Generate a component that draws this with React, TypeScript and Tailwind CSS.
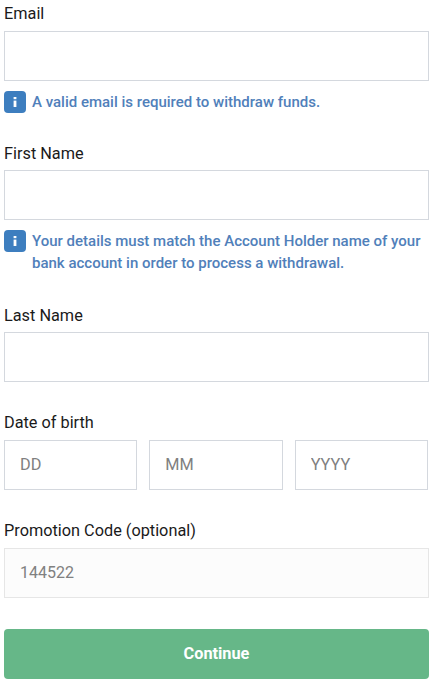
import React from 'react';

function InfoBadge() {
  return (
    <span className="flex h-[22px] w-[22px] shrink-0 items-center justify-center rounded-[4px] bg-[#3d7ebf]">
      <svg width="4" height="10" viewBox="0 0 4 10">
        <rect x="0.6" y="0" width="2.8" height="2.2" fill="#fff" />
        <rect x="0.6" y="3.6" width="2.8" height="6.4" fill="#fff" />
      </svg>
    </span>
  );
}

function Label({ children }: { children: React.ReactNode }) {
  return <label className="block text-[16.3px] leading-[20px] text-[#1a1a1a]">{children}</label>;
}

function Hint({ children }: { children: React.ReactNode }) {
  return (
    <div className="mt-[10px] flex gap-[6px]">
      <InfoBadge />
      <p className="text-[15px] font-medium leading-[22px] text-[#5080ba]">{children}</p>
    </div>
  );
}

export default function App() {
  return (
    <div className="h-[681px] w-[433px] overflow-hidden bg-white px-[4px] pt-[4px] font-['Roboto',sans-serif]">
      <div>
        <Label>Email</Label>
        <input className="mt-[7px] block h-[50px] w-full border border-[#d4d8de] bg-white" />
        <Hint>A valid email is required to withdraw funds.</Hint>
      </div>

      <div className="mt-[31px]">
        <Label>First Name</Label>
        <input className="mt-[6px] block h-[50px] w-full border border-[#d4d8de] bg-white" />
        <Hint>Your details must match the Account Holder name of your bank account in order to process a withdrawal.</Hint>
      </div>

      <div className="mt-[32px]">
        <Label>Last Name</Label>
        <input className="mt-[6px] block h-[50px] w-full border border-[#d4d8de] bg-white" />
      </div>

      <div className="mt-[31px]">
        <Label>Date of birth</Label>
        <div className="mt-[7px] flex gap-[12px] pr-[1px]">
          {['DD', 'MM', 'YYYY'].map((p) => (
            <input
              key={p}
              placeholder={p}
              className="block h-[50px] min-w-0 flex-1 border border-[#d4d8de] bg-white px-[15px] pb-[2px] text-[16.3px] placeholder:text-[#808080]"
            />
          ))}
        </div>
      </div>

      <div className="mt-[31px]">
        <Label>Promotion Code (optional)</Label>
        <input
          readOnly
          value="144522"
          className="mt-[7px] block h-[50px] w-full border border-[#e6e6e6] bg-[#fcfcfc] px-[15px] pb-[2px] text-[16px] text-[#808080]"
        />
      </div>

      <button className="mt-[31px] block h-[50px] w-full rounded-[4px] bg-[#66b788] text-[16.3px] font-bold text-white">
        Continue
      </button>
    </div>
  );
}
